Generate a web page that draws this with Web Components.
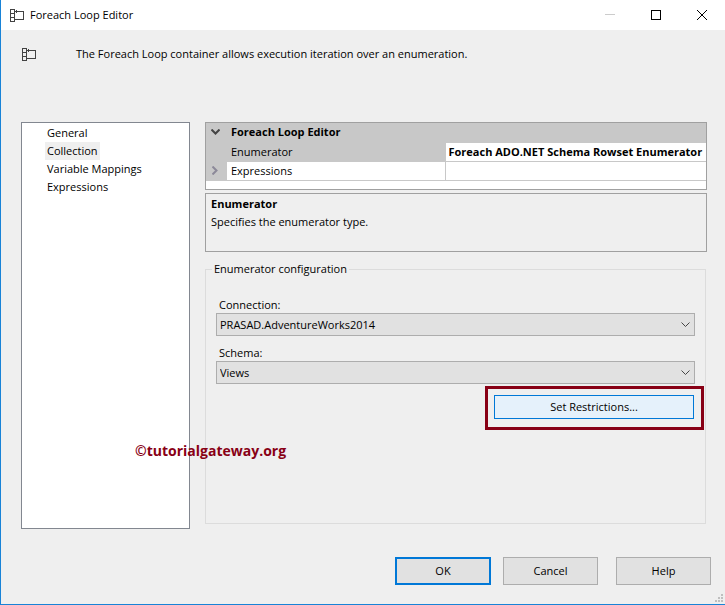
<!DOCTYPE html>
<html lang="en">
<head>
<meta charset="utf-8">
<title>Foreach Loop Editor</title>
<style>
html, body
{
  margin: 0;
  height: 100%;
}

body
{
  --face: #efefef;
  --line: #a0a0a0;
  --blue: #0078d7;
  --red: #880015;
  font-family: "Open Sans", "Noto Sans", sans-serif;
  font-size: 11px;
  line-height: 18px;
  color: #000;
}
</style>
</head>
<body>

<editor-window heading="Foreach Loop Editor">
  <editor-intro>The Foreach Loop container allows execution iteration over an enumeration.</editor-intro>

  <page-list slot="nav">
    <page-item>General</page-item>
    <page-item current>Collection</page-item>
    <page-item>Variable Mappings</page-item>
    <page-item>Expressions</page-item>
  </page-list>

  <property-grid slot="page"></property-grid>
  <property-help slot="page" heading="Enumerator">Specifies the enumerator type.</property-help>
  <group-box slot="page" heading="Enumerator configuration">
    <drop-down label="Connection:" value="PRASAD.AdventureWorks2014"></drop-down>
    <drop-down label="Schema:" value="Views"></drop-down>
    <push-button kind="marked">Set Restrictions...</push-button>
  </group-box>

  <push-button slot="actions" kind="default">OK</push-button>
  <push-button slot="actions">Cancel</push-button>
  <push-button slot="actions" class="help">Help</push-button>
  <water-mark slot="overlay">©tutorialgateway.org</water-mark>
</editor-window>

<script>
function define(name, html, setup)
{
  const temp = document.createElement('template')
  temp.innerHTML = html

  customElements.define(name, class extends HTMLElement
  {
    constructor()
    {
      super()
      this.attachShadow({mode: 'open'})
      this.shadowRoot.appendChild(temp.content.cloneNode(true))
      if(setup) setup(this, this.shadowRoot)
    }
  })
}

// film strip with a frame, used in the title bar and beside the intro
define('loop-icon', `
<style>
:host { display: block; width: 14px; height: 13px; }
svg { display: block; }
</style>
<svg width="14" height="13" viewBox="0 0 14 13" fill="none" stroke="#424242" shape-rendering="crispEdges">
  <path d="M.5.5h4v12h-4zM.5 4.5h4M.5 8.5h4M4.5 2.5h9v8h-9M6.5 1v3"/>
</svg>`)

define('editor-window', `
<style>
:host
{
  display: flex;
  flex-direction: column;
  position: relative;
  box-sizing: border-box;
  min-height: 100%;
  border-left: 1px solid #1883d7;
  border-bottom: 1px solid #1883d7;
  background: var(--face);
}
header
{
  display: flex;
  align-items: center;
  height: 30px;
  padding-left: 9px;
  background: #fff;
}
h1
{
  flex: 1;
  margin: 0 0 0 6px;
  font: inherit;
}
header button
{
  display: grid;
  place-items: center;
  width: 46px;
  height: 30px;
  padding: 0;
  border: 0;
  background: none;
}
.panes
{
  flex: 1;
  display: grid;
  grid-template-columns: 169px minmax(0, 1fr);
  gap: 15px;
  padding: 0 18px 0 20px;
}
.page
{
  display: flex;
  flex-direction: column;
  gap: 3px;
}
footer
{
  display: flex;
  justify-content: flex-end;
  gap: 12px;
  padding: 28px 14px 19px;
}
::slotted(.help) { margin-left: 6px; }
.grip
{
  position: absolute;
  right: 2px;
  bottom: 2px;
}
</style>
<header>
  <loop-icon></loop-icon>
  <h1></h1>
  <button aria-label="Minimize" disabled><svg width="10" height="10" stroke="#ccc" shape-rendering="crispEdges"><path d="M0 4.5h10"/></svg></button>
  <button aria-label="Maximize"><svg width="10" height="10" fill="none" stroke="#000" shape-rendering="crispEdges"><path d="M.5.5h9v9h-9z"/></svg></button>
  <button aria-label="Close"><svg width="10" height="10" stroke="#000"><path d="M0 0l10 10M10 0L0 10"/></svg></button>
</header>
<slot></slot>
<div class="panes">
  <slot name="nav"></slot>
  <main class="page"><slot name="page"></slot></main>
</div>
<footer><slot name="actions"></slot></footer>
<svg class="grip" width="8" height="8" fill="#bfbfbf"><path d="M6 0h2v2H6zM3 3h2v2H3zM6 3h2v2H6zM0 6h2v2H0zM3 6h2v2H3zM6 6h2v2H6z"/></svg>
<slot name="overlay"></slot>`,
(el, root) =>
{
  root.querySelector('h1').textContent = el.getAttribute('heading')
})

define('editor-intro', `
<style>
:host
{
  display: flex;
  align-items: center;
  gap: 40px;
  height: 48px;
  padding: 0 21px 44px;
}
</style>
<loop-icon></loop-icon>
<span><slot></slot></span>`)

define('page-list', `
<style>
:host
{
  display: block;
  border: 1px solid #828790;
  background: #fff;
}
nav
{
  display: flex;
  flex-direction: column;
  align-items: flex-start;
  padding: 1px 0 0 23px;
}
</style>
<nav aria-label="Pages"><slot></slot></nav>`)

define('page-item', `
<style>
:host { display: block; }
:host([current]) { background: var(--face); }
a
{
  display: block;
  padding: 0 2px;
  color: inherit;
  text-decoration: none;
}
</style>
<a href="#"><slot></slot></a>`)

define('property-grid', `
<style>
:host
{
  display: block;
  height: 66px;
  border: 1px solid var(--line);
  background: #fff;
  overflow: hidden;
}
table
{
  width: 100%;
  table-layout: fixed;
  border-collapse: collapse;
}
tr { height: 19px; }
th, td
{
  height: 18px;
  padding: 0 0 0 4px;
  border-bottom: 1px solid #c8c8c8;
  font-weight: normal;
  text-align: left;
  white-space: nowrap;
  overflow: hidden;
}
th.gutter
{
  padding: 0;
  background: #c8c8c8;
}
.gutter button
{
  display: grid;
  place-items: center;
  width: 18px;
  height: 18px;
  padding: 0;
  border: 0;
  background: none;
}
.category th, .selected th { background: #c8c8c8; }
.category th, .selected td { font-weight: bold; }
td { padding-left: 3px; border-left: 1px solid #c8c8c8; }
</style>
<table>
  <colgroup><col style="width: 21px"><col style="width: 218px"><col></colgroup>
  <tr class="category">
    <th class="gutter"><button aria-label="Collapse"><svg width="9" height="6" fill="none" stroke="#444" stroke-width="2"><path d="M.5.5l4 4 4-4"/></svg></button></th>
    <th colspan="2">Foreach Loop Editor</th>
  </tr>
  <tr class="selected">
    <th class="gutter"></th>
    <th scope="row">Enumerator</th>
    <td>Foreach ADO.NET Schema Rowset Enumerator</td>
  </tr>
  <tr>
    <th class="gutter"><button aria-label="Expand"><svg width="6" height="9" fill="none" stroke="#8c8999" stroke-width="2"><path d="M.5.5l4 4-4 4"/></svg></button></th>
    <th scope="row">Expressions</th>
    <td></td>
  </tr>
</table>`)

define('property-help', `
<style>
:host
{
  display: block;
  height: 56px;
  padding: 1px 5px 0;
  border: 1px solid var(--line);
}
h2, p { margin: 0; font-size: inherit; }
</style>
<h2></h2>
<p><slot></slot></p>`,
(el, root) =>
{
  root.querySelector('h2').textContent = el.getAttribute('heading')
})

define('group-box', `
<style>
:host
{
  flex: 1;
  display: flex;
  padding: 5px 1px 5px 0;
}
fieldset
{
  flex: 1;
  min-width: 0;
  margin: 0;
  padding: 19px 10px 10px;
  border: 1px solid #dcdcdc;
}
legend
{
  padding: 0 2px;
  margin-left: -4px;
}
.fields
{
  display: flex;
  flex-direction: column;
  gap: 9px;
}
/* the red frame reaches past the fields */
::slotted(push-button)
{
  align-self: flex-end;
  margin: -7px -9px 0 0;
}
</style>
<fieldset>
  <legend></legend>
  <div class="fields"><slot></slot></div>
</fieldset>`,
(el, root) =>
{
  root.querySelector('legend').textContent = el.getAttribute('heading')
})

define('drop-down', `
<style>
:host { display: block; }
label
{
  display: block;
  padding-left: 3px;
  line-height: 16px;
}
div { display: grid; align-items: center; }
select, svg { grid-area: 1 / 1; }
select
{
  appearance: none;
  width: 100%;
  height: 23px;
  padding: 0 24px 0 3px;
  border: 1px solid #adadad;
  border-radius: 0;
  background: #e1e1e1;
  color: inherit;
  font: inherit;
}
svg
{
  justify-self: end;
  margin-right: 5px;
  pointer-events: none;
}
</style>
<label for="box"></label>
<div>
  <select id="box"><option></option></select>
  <svg width="9" height="6" fill="none" stroke="#444"><path d="M.5.5l4 4 4-4"/></svg>
</div>`,
(el, root) =>
{
  root.querySelector('label').textContent = el.getAttribute('label')
  root.querySelector('option').textContent = el.getAttribute('value')
})

define('push-button', `
<style>
:host { display: block; }
:host([kind="marked"])
{
  padding: 6px 7px 8px 6px;
  border: 3px solid var(--red);
}
button
{
  display: block;
  box-sizing: border-box;
  width: 95px;
  height: 28px;
  padding: 0;
  border: 1px solid #adadad;
  background: #e1e1e1;
  color: inherit;
  font: inherit;
}
:host([kind="default"]) button
{
  width: 96px;
  border: 2px solid var(--blue);
}
:host([kind="marked"]) button
{
  width: 200px;
  height: 24px;
  border-color: var(--blue);
  background: #e5f1fb;
}
</style>
<button type="button"><slot></slot></button>`)

define('water-mark', `
<style>
:host
{
  position: absolute;
  left: 134px;
  top: 442px;
  color: var(--red);
  font-size: 14px;
  font-weight: bold;
}
</style>
<slot></slot>`)
</script>
</body>
</html>
